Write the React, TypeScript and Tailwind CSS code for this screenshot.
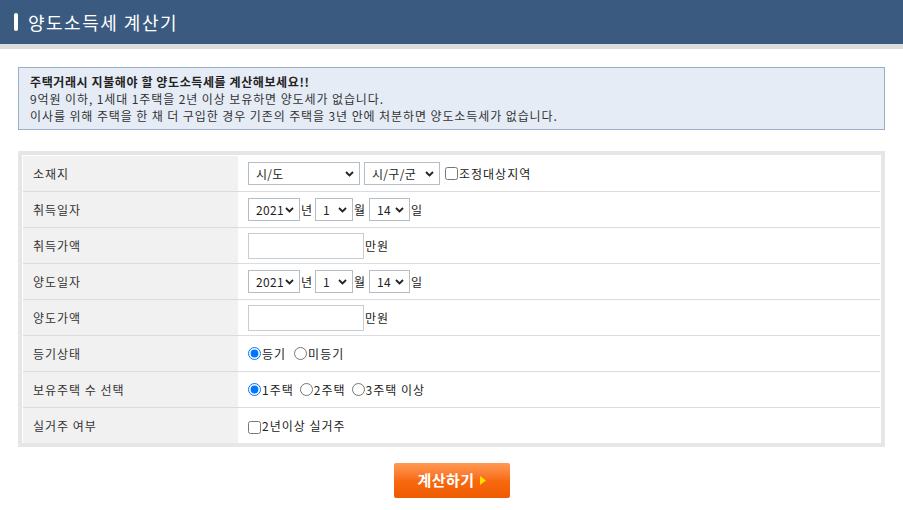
import React from "react";

const font = { fontFamily: '"Noto Sans CJK KR", "Noto Sans", sans-serif' };

function Chevron() {
  return (
    <svg width="9" height="6" viewBox="0 0 9 6" className="pointer-events-none absolute right-[6px] top-1/2 -translate-y-1/2">
      <path d="M1 1 L4.5 4.5 L8 1" fill="none" stroke="#222" strokeWidth="1.8" />
    </svg>
  );
}

function Sel({ w, value }: { w: string; value: string }) {
  return (
    <div className={`relative ${w} h-[23px]`}>
      <select
        defaultValue={value}
        className="h-full w-full appearance-none border border-[#b4bec9] bg-white pl-[7px] text-[12px] tracking-[0.3px] text-[#222] outline-none"
        style={font}
      >
        <option value={value}>{value}</option>
      </select>
      <Chevron />
    </div>
  );
}

function DateSel() {
  return (
    <div className="flex items-center text-[12px] text-[#222]">
      <Sel w="w-[52px]" value="2021" />
      <span className="ml-[1px] mr-[2px]">년</span>
      <Sel w="w-[38px]" value="1" />
      <span className="ml-[1px] mr-[3px]">월</span>
      <Sel w="w-[41px]" value="14" />
      <span className="ml-[1px]">일</span>
    </div>
  );
}

function MoneyInput() {
  return (
    <div className="flex items-center text-[12px] text-[#222]">
      <input type="text" className="h-[26px] w-[116px] border border-[#c6cdd4] bg-white" />
      <span className="ml-[1px]">만원</span>
    </div>
  );
}

function Row({ label, children, last }: { label: string; children: React.ReactNode; last?: boolean }) {
  return (
    <div className={`flex ${last ? "h-[35px]" : "h-[36px] border-b border-[#dcdcdc]"}`}>
      <div className="flex w-[215px] items-center bg-[#f1f1f1] pl-[10px] text-[12px] text-[#333]">{label}</div>
      <div className="flex flex-1 items-center pl-[10px]">{children}</div>
    </div>
  );
}

export default function App() {
  return (
    <div className="min-h-[510px] w-[903px] bg-white" style={font}>
      <div className="flex h-[44px] items-center bg-[#3a5a7f] pl-[14px]">
        <span className="h-[18px] w-[4px] rounded-[2px] bg-white" />
        <span className="ml-[10px] text-[18px] tracking-[1.5px] text-white">양도소득세 계산기</span>
      </div>
      <div className="h-[5px] bg-[#dcdcdc]" />

      <div className="mx-[18px] mt-[18px] border border-[#9aafc5] bg-[#e5ecf6] px-[11px] py-[5px] text-[12px] leading-[17px] tracking-[0.9px] text-[#333]">
        <div className="font-bold tracking-[0.6px] text-[#222]">주택거래시 지불해야 할 양도소득세를 계산해보세요!!</div>
        <div>9억원 이하, 1세대 1주택을 2년 이상 보유하면 양도세가 없습니다.</div>
        <div>이사를 위해 주택을 한 채 더 구입한 경우 기존의 주택을 3년 안에 처분하면 양도소득세가 없습니다.</div>
      </div>

      <div className="mx-[18px] mt-[21px] border-4 border-[#e6e6e6] bg-white p-[1px] pb-0 tracking-[1px]">
        <Row label="소재지">
          <div className="flex items-center text-[12px] text-[#222]">
            <Sel w="w-[112px]" value="시/도" />
            <div className="ml-[4px]">
              <Sel w="w-[76px]" value="시/구/군" />
            </div>
            <input type="checkbox" className="ml-[5px] mr-[1px] h-[13px] w-[13px]" />
            <span>조정대상지역</span>
          </div>
        </Row>
        <Row label="취득일자">
          <DateSel />
        </Row>
        <Row label="취득가액">
          <MoneyInput />
        </Row>
        <Row label="양도일자">
          <DateSel />
        </Row>
        <Row label="양도가액">
          <MoneyInput />
        </Row>
        <Row label="등기상태">
          <div className="flex items-center text-[12px] text-[#222]">
            <input type="radio" name="reg" defaultChecked className="m-0 h-[13px] w-[13px]" />
            <span className="ml-[1px]">등기</span>
            <input type="radio" name="reg" className="m-0 ml-[8px] h-[13px] w-[13px]" />
            <span className="ml-[1px]">미등기</span>
          </div>
        </Row>
        <Row label="보유주택 수 선택">
          <div className="flex items-center text-[12px] text-[#222]">
            <input type="radio" name="cnt" defaultChecked className="m-0 h-[13px] w-[13px]" />
            <span className="ml-[1px]">1주택</span>
            <input type="radio" name="cnt" className="m-0 ml-[6px] h-[13px] w-[13px]" />
            <span className="ml-[1px]">2주택</span>
            <input type="radio" name="cnt" className="m-0 ml-[6px] h-[13px] w-[13px]" />
            <span className="ml-[1px]">3주택 이상</span>
          </div>
        </Row>
        <Row label="실거주 여부" last>
          <div className="flex items-center text-[12px] text-[#222]">
            <input type="checkbox" className="m-0 mt-[3px] h-[13px] w-[13px]" />
            <span className="ml-[1px]">2년이상 실거주</span>
          </div>
        </Row>
      </div>

      <div className="mt-[16px] flex justify-center">
        <button
          className="flex h-[35px] w-[116px] items-center justify-center rounded-[2px] bg-gradient-to-b from-[#ff9a52] via-[#f86a10] to-[#ef5a00] text-[15px] font-bold tracking-[0.5px] text-white"
          style={font}
        >
          계산하기
          <svg width="6" height="9" viewBox="0 0 6 9" className="ml-[5px]">
            <path d="M0 0 L6 4.5 L0 9 Z" fill="#ffe000" />
          </svg>
        </button>
      </div>
    </div>
  );
}
